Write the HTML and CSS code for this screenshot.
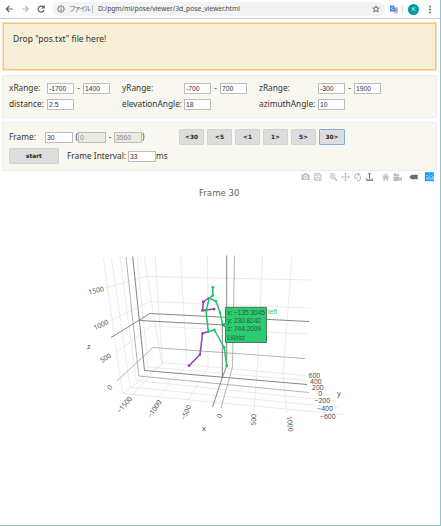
FILE: index.html
```html
<!DOCTYPE html>
<html lang="ja">
<head>
<meta charset="utf-8">
<title>3d_pose_viewer.html</title>
<link rel="stylesheet" href="styles.css">
</head>
<body>
<div class="window">
  <header class="toolbar">
    <svg class="nav" width="48" height="18" viewBox="0 0 48 18">
      <g fill="none" stroke-width="1.2">
        <path stroke="#606468" d="M12.5 9H6.5M9.3 6L6.3 9L9.3 12"/>
        <path stroke="#b8babd" d="M22 9H28M25.2 6L28.2 9L25.2 12"/>
        <path stroke="#606468" d="M43.5 7.3A3 3 0 1 0 44 10M44.2 5.3V8H41.5"/>
      </g>
    </svg>
    <div class="omnibox">
      <svg width="8" height="8" viewBox="0 0 8 8"><circle cx="4" cy="4" r="3.2" fill="none" stroke="#66696d" stroke-width=".9"/><path stroke="#66696d" d="M4 3.5V6M4 1.9V2.8"/></svg>
      <span class="scheme">ファイル</span><i class="bar"></i><span class="url">D:/pgm/ml/pose/viewer/3d_pose_viewer.html</span>
      <svg class="star" width="8" height="8" viewBox="0 0 8 8"><path fill="none" stroke="#55585c" stroke-width=".8" d="M4 .8L4.9 3H7.3L5.4 4.5L6.1 7L4 5.6L1.9 7L2.6 4.5L.7 3H3.1Z"/></svg>
    </div>
    <svg class="translate" width="8" height="9" viewBox="0 0 8 9"><path fill="#c4c8cf" d="M3 2H8V8.5H4.5Z"/><path fill="#3f7ce8" d="M0 .5H4L5.5 6.5H0Z"/><path fill="none" stroke="#fff" stroke-width=".7" d="M3.3 2.7A1.2 1.2 0 1 0 3.5 4H2.5"/><path stroke="#78808c" stroke-width=".6" d="M5 4H7.5M5.2 6.8L7 4.3M5.5 4.5L7.4 6.8"/></svg>
    <i class="split"></i>
    <span class="avatar">K</span>
    <svg class="more" width="4" height="9" viewBox="0 0 4 9"><g fill="#5f6368"><circle cx="2" cy="1.5" r=".9"/><circle cx="2" cy="4.5" r=".9"/><circle cx="2" cy="7.5" r=".9"/></g></svg>
  </header>

  <main>
    <section class="drop">Drop "pos.txt" file here!</section>

    <section class="panel ranges">
      <label>xRange:</label><div class="pair"><input value="-1700"><span>-</span><input value="1400"></div>
      <label>yRange:</label><div class="pair"><input value="-700"><span>-</span><input value="700"></div>
      <label>zRange:</label><div class="pair"><input value="-300"><span>-</span><input value="1900"></div>
      <label>distance:</label><div class="pair"><input value="2.5"></div>
      <label>elevationAngle:</label><div class="pair"><input value="18"></div>
      <label>azimuthAngle:</label><div class="pair"><input value="10"></div>
    </section>

    <section class="panel frames">
      <div class="row">
        <label class="frame">Frame:</label><input value="30">
        <span class="open">(</span><input value="0" disabled><span class="dash">-</span><input value="3560" disabled><span class="close">)</span>
        <div class="steps"><button>&lt;30</button><button>&lt;5</button><button>&lt;1</button><button>1&gt;</button><button>5&gt;</button><button class="focus">30&gt;</button></div>
      </div>
      <div class="row second">
        <button class="start">start</button><label class="interval">Frame Interval:</label><input value="33"><span>ms</span>
      </div>
    </section>

    <svg class="plot" width="440" height="354" viewBox="0 171 440 354">
      <g class="modebar">
        <g fill="#bcbcbc" stroke="none">
          <path fill-rule="evenodd" d="M301.5 174.5H303.5L304.3 173.3H307L307.8 174.5H309.5V180H301.5ZM305.6 175A2.1 2.1 0 1 0 305.7 175ZM305.6 176A1.1 1.1 0 1 1 305.5 176Z"/>
          <path d="M382 177L385.8 173.3L389.6 177L389 177.6L385.8 174.6L382.6 177.6ZM383.3 177.6L385.8 175.3L388.3 177.6V180.5H386.5V178.5H385.1V180.5H383.3Z"/>
          <path d="M393.5 177H399.5V181H393.5ZM399.7 178.5L402 177V181L399.7 180ZM393.7 175A1.5 1.5 0 1 1 396.5 175.5A1.4 1.4 0 1 1 398.8 176.5H394Z"/>
        </g>
        <g fill="none" stroke="#bcbcbc" stroke-width=".9">
          <path d="M314.4 173.5H319.5L321 175V180.3H314.4ZM316 173.5V175.8H319V173.5M315.8 180V177.8H319.6V180"/>
          <circle cx="332.5" cy="176" r="2.6"/><path stroke-width="1.4" d="M334.4 178L337 180.7"/><path d="M331 176H334M332.5 174.5V177.5"/>
          <path d="M341.5 177H349.5M345.5 173V181M344.3 174.2L345.5 173L346.7 174.2M344.3 179.8L345.5 181L346.7 179.8M342.7 175.8L341.5 177L342.7 178.2M348.3 175.8L349.5 177L348.3 178.2"/>
          <path stroke-width="1.1" d="M355.2 178.8C353.2 176 355.8 173 359 174.3M357.7 173L359.6 174.4L358 176M360.3 176.3C361.6 178.8 359.5 181 356.8 180.6M355.2 178.8L357.6 177.4"/>
        </g>
        <path fill="none" stroke="#777" stroke-width="1" d="M369.5 173V179M368 174.5L369.5 173L371 174.5M366.5 178.3C365.5 180.8 373.5 180.8 372.5 178.3M366 180.3H373"/>
        <path fill="#6c6c6c" d="M409.3 177L411.5 174.8H417.7V179.2H411.5Z"/>
        <rect x="425" y="172.2" width="9" height="9" fill="#119dff"/>
        <path stroke="#fff" stroke-width=".8" d="M427 179.7V177.4M429 179.7V175.9M431 179.7V177.4M433 179.7V175.9M427 175.9V175M429 174.6V173.7M431 175.9V175M433 174.6V173.7"/>
      </g>
      <text class="title" x="199" y="195.6" textLength="40.5" lengthAdjust="spacingAndGlyphs">Frame 30</text>

      <g class="grid">
        <path d="M103.5 259L122.5 393.5L344 414.5M111.5 258L130 387L338 407.5M120 257.5L136 380.5L334 401M137 256L148 367L313 381M144 255.5L161.5 362.5L306 375.5"/>
        <path d="M155 255.5L162.5 362.5L132 395M180.5 255.5L187 365L158 397M207.5 255.5L208 368L188 400M262.5 256L257 372L254 409M292 257L283 374L287 413"/>
        <path d="M105 288L145 276.5L313 280M110.5 320.5L150 301.5L311 308M117 352L151 326L307 334M122.5 393.5L163 363"/>
      </g>
      <g class="axis">
        <path stroke="#aaa" d="M126 257L138.8 376L309 392.5M234.5 255.5L232.5 367L221 408M117 381L153 347.5L305 358.5"/>
        <path d="M132.7 256.5L144.5 370.5L307 384.5M226.7 255.5V366L222.3 377.5L212.5 407M222.3 325V377.5M111 337.5L150 313.5L309 321.5M139.5 320.5L225 325"/>
      </g>

      <g class="limb purple">
        <path d="M209 297.5L203.5 302L202.5 310.5L214 309M208 331.5L202.5 333.5L200 354.5L189 365.7"/>
        <g><rect x="202" y="300.5" width="2.5" height="2.5"/><rect x="201.3" y="309.2" width="2.5" height="2.5"/><circle cx="214" cy="309.2" r="1.4"/><circle cx="202.5" cy="333.5" r="1.3"/><circle cx="200" cy="354.5" r="1.3"/><circle cx="189" cy="365.7" r="1.4"/></g>
      </g>
      <g class="limb green">
        <path d="M212.8 287.3V295.4L209.3 298L206 311L208.3 331.7L214.3 330L224.2 347.5L226.7 366M209.3 298L216 301.2L220 312.5L222.8 325"/>
        <g><circle cx="212.8" cy="287.3" r="1.4"/><circle cx="212.8" cy="295.4" r="1.3"/><circle cx="216" cy="301.2" r="1.3"/><circle cx="206" cy="311" r="1.3"/><circle cx="208.3" cy="331.7" r="1.3"/><circle cx="214.3" cy="330" r="1.4"/><circle cx="220" cy="312.5" r="1.2"/><circle cx="222.8" cy="325" r="1.4"/><circle cx="224.2" cy="347.5" r="1.4"/><circle cx="226.7" cy="366" r="1.4"/></g>
      </g>

      <path fill="#2ecc71" stroke="#35604a" stroke-width=".8" d="M225.5 307.3H266.5V342.5H225.5V327.5L222.8 325L225.5 322.5Z"/>
      <g class="hover">
        <text x="227.3" y="314.5" textLength="37.8">x: −135.3045</text>
        <text x="227.3" y="322.8" textLength="33.7">y: 230.8242</text>
        <text x="227.3" y="331.2" textLength="33.7">z: 744.2009</text>
        <text x="227.3" y="339.7" textLength="17.5">LWrist</text>
        <text class="side" x="268" y="314.3" textLength="9.2">left</text>
      </g>

      <g class="ticks">
        <text transform="translate(89.3 294.7) rotate(-14)">1500</text>
        <text transform="translate(95 330.3) rotate(-25)">1000</text>
        <text transform="translate(102 363) rotate(-32)">500</text>
        <text transform="translate(110 390.5) rotate(-43)">0</text>
        <text transform="translate(120 413.8) rotate(-50)">−1500</text>
        <text transform="translate(151.2 418.2) rotate(-57)">−1000</text>
        <text transform="translate(185 420.5) rotate(-66)">−500</text>
        <text transform="translate(221 418.5) rotate(-72)">0</text>
        <text transform="translate(255.8 425.7) rotate(-88)">500</text>
        <text transform="translate(286.8 416.3) rotate(84)">1000</text>
        <text x="308.5" y="378">600</text>
        <text x="310" y="383.6">400</text>
        <text x="312" y="389.5">200</text>
        <text x="318.3" y="396">0</text>
        <text x="314.5" y="403">−200</text>
        <text x="317.3" y="410.5">−400</text>
        <text x="320" y="418.7">−600</text>
      </g>
      <g class="names">
        <text x="87" y="348.5">z</text><text x="202" y="430.8">x</text><text x="337" y="396">y</text>
      </g>
    </svg>
  </main>
</div>
</body>
</html>
```
FILE: styles.css
```css
* { box-sizing: border-box; }
body { margin: 0; overflow: hidden; background: #fff; color: #333; font: 8.3px/12px "Noto Sans", "Noto Sans CJK JP", sans-serif; }
.window { width: 441px; height: 526px; border-right: 1px solid #91c9d1; border-bottom: 1px solid #91c9d1; overflow: hidden; }
svg { display: block; flex: none; }

.toolbar { display: flex; align-items: center; height: 19px; border-bottom: 1px solid #c9c9c9; }
.nav { margin-right: 4px; }
.omnibox { display: flex; align-items: center; width: 333px; height: 14px; padding: 0 5px; border-radius: 7px; background: #f1f3f4; font: 6.8px/14px "Noto Sans", "Noto Sans CJK JP", sans-serif; white-space: nowrap; }
.scheme { width: 20px; margin-left: 4px; color: #6b6e72; font-size: 6.8px; letter-spacing: -1.7px; }
.bar { width: 1px; height: 8px; margin: 0 5px 0 3px; background: #bfc2c5; }
.url { color: #46494d; letter-spacing: -.06px; }
.star { margin-left: auto; }
.translate { margin-left: 5px; }
.split { width: 1px; height: 8px; margin: 0 5px 0 4px; background: #d5d7d9; }
.avatar { width: 11px; height: 11px; border-radius: 50%; background: #0097a7; color: #fff; font-size: 6px; line-height: 11px; text-align: center; }
.more { margin-left: 9px; }

main { padding-top: 3px; }
.drop { width: 435px; height: 49px; margin-left: 2px; padding: 10px; border: 1px solid #ffe2bd; outline: 1px solid #ffc06e; outline-offset: -2px; background: #f8efd8; font-size: 8.5px; }
.panel { width: 435px; margin: 4px 0 0 2px; border: 1px solid #eeeee9; background: #f8f8f0; }
.ranges { display: grid; grid-template-columns: 38px 75px 62px 75px 59px 66px; grid-template-rows: 16px 16px; height: 43px; padding: 4px 6px; align-items: center; white-space: nowrap; }
.pair { display: flex; align-items: center; }
.pair span { width: 9px; text-align: center; }
.frames { height: 49px; padding: 5px 6px; }
input { width: 27px; height: 11px; margin: 0; padding: 0 1px; border: 1px solid #bdbdbd; background: #fff; color: #333; font: 6.8px/9px "Liberation Sans", sans-serif; flex: none; }
input:disabled { background: #ebebe4; color: #888; }
.row { display: flex; align-items: center; height: 18px; }
.second { margin-top: 1px; }
.frame { width: 36px; }
.row input { width: 28px; }
.open { width: 5px; text-align: right; }
.dash { width: 8px; text-align: center; }
.close { width: 4px; }
.steps { display: flex; gap: 3px; margin-left: 33px; }
button { width: 25px; height: 16px; margin: 0; padding: 0; border: 1px solid #d2d2d2; border-radius: 1px; background: #ddd; color: #222; font: bold 5.8px/14px "DejaVu Sans", sans-serif; text-align: center; }
.focus { width: 26px; border-color: #81aaea; }
.start { width: 50px; height: 16px; }
.interval { width: 61px; margin-left: 8px; white-space: nowrap; }

.plot { width: 440px; height: 354px; }
.plot text { font-family: "Open Sans", sans-serif; fill: #444; }
.plot .title { font: 8.5px "DejaVu Sans", sans-serif; fill: #666; }
.grid { fill: none; stroke: #e6e6e6; stroke-width: .8; }
.axis { fill: none; stroke: #777; stroke-width: .9; }
.limb { fill: none; stroke-width: 1.5; stroke-linejoin: round; }
.purple { stroke: #8e44ad; }
.purple g { fill: #8e44ad; stroke: none; }
.green { stroke: #1fc468; }
.green g { fill: #1fc468; stroke: none; }
.hover { font-size: 6.7px; }
.plot .hover text { font-family: "Liberation Sans", sans-serif; fill: #285b40; }
.plot .hover .side { fill: #2ecc71; }
.ticks { font-size: 6.8px; }
.names { font-size: 7.5px; }
```
